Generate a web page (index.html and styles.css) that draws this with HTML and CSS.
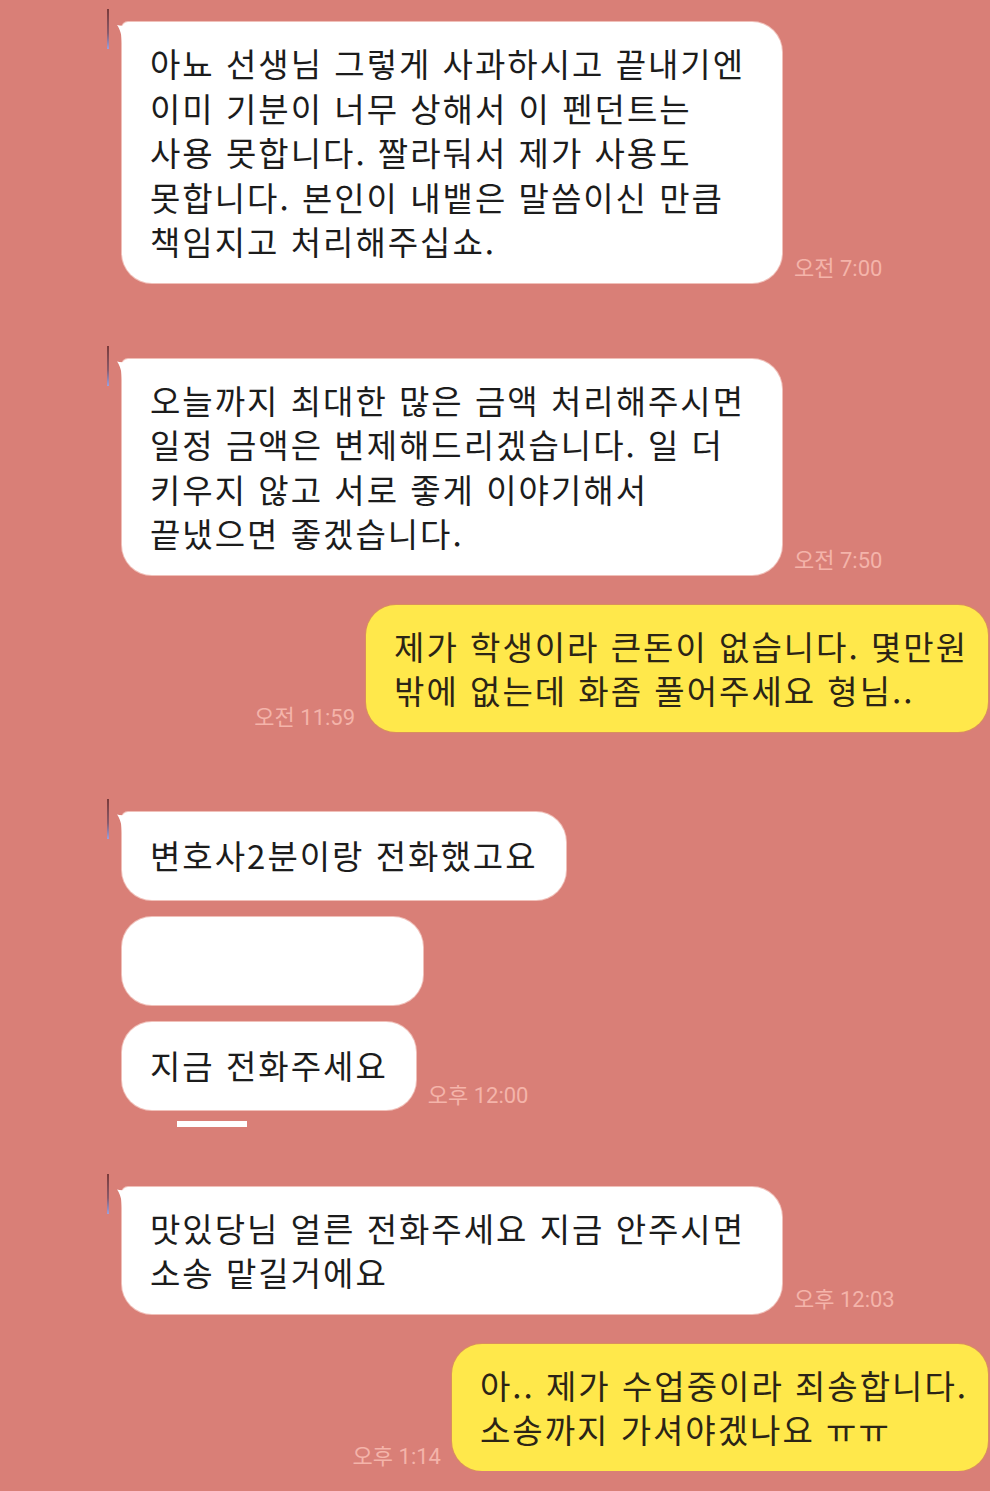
FILE: index.html
```html
<!DOCTYPE html>
<html lang="ko">

<head>
	<meta charset="UTF-8">
	<meta name="viewport" content="width=device-width, initial-scale=1.0">
	<title>채팅</title>
	<link rel="stylesheet" href="styles.css">
</head>

<body>
	<div class="chat">
		<div class="group in">
			<div class="row">
				<div class="bubble tail wide">아뇨 선생님 그렇게 사과하시고 끝내기엔<br>이미 기분이 너무 상해서 이 펜던트는<br>사용 못합니다. 짤라둬서 제가 사용도<br>못합니다. 본인이 내뱉은 말씀이신 만큼<br>책임지고 처리해주십쇼.</div>
				<span class="time">오전 7:00</span>
			</div>
		</div>

		<div class="group in gap-lg">
			<div class="row">
				<div class="bubble tail wide">오늘까지 최대한 많은 금액 처리해주시면<br>일정 금액은 변제해드리겠습니다. 일 더<br>키우지 않고 서로 좋게 이야기해서<br>끝냈으면 좋겠습니다.</div>
				<span class="time">오전 7:50</span>
			</div>
		</div>

		<div class="group out gap-sm">
			<div class="row">
				<span class="time">오전 11:59</span>
				<div class="bubble">제가 학생이라 큰돈이 없습니다. 몇만원<br>밖에 없는데 화좀 풀어주세요 형님..</div>
			</div>
		</div>

		<div class="group in gap-xl">
			<div class="row">
				<div class="bubble tail single">변호사2분이랑 전화했고요</div>
			</div>
			<div class="row">
				<div class="bubble single blank"></div>
			</div>
			<div class="row">
				<div class="bubble single">지금 전화주세요</div>
				<span class="time">오후 12:00</span>
			</div>
			<div class="bar"></div>
		</div>

		<div class="group in gap-md">
			<div class="row">
				<div class="bubble tail wide">맛있당님 얼른 전화주세요 지금 안주시면<br>소송 맡길거에요</div>
				<span class="time">오후 12:03</span>
			</div>
		</div>

		<div class="group out gap-sm">
			<div class="row">
				<span class="time">오후 1:14</span>
				<div class="bubble">아.. 제가 수업중이라 죄송합니다.<br>소송까지 가셔야겠나요 ㅠㅠ</div>
			</div>
		</div>
	</div>
</body>

</html>
```

FILE: styles.css
```css
*,
*:before,
*:after {
	box-sizing: border-box;
}

html {
	font-family: "Noto Sans CJK KR", "Noto Sans", sans-serif;
}

body {
	margin: 0;
	padding: 0;
	background-color: #d97f77;
	color: #1c1c1c;
	overflow: hidden;
}

.chat {
	padding: 22px 2px 0 122px;
}

.group {
	position: relative;
	display: flex;
	flex-direction: column;
	gap: 17px;
}

.group.gap-sm {
	margin-top: 30px;
}

.group.gap-md {
	margin-top: 60px;
}

.group.gap-lg {
	margin-top: 76px;
}

.group.gap-xl {
	margin-top: 80px;
}

/* little mark left of the first bubble */
.group.in:before {
	content: "";
	position: absolute;
	left: -15px;
	top: -13px;
	width: 2px;
	height: 40px;
	background: linear-gradient(#7a3a3a, #8a5a6a 60%, #9aa0e0);
}

.row {
	display: flex;
	align-items: flex-end;
	gap: 12px;
}

.group.out .row {
	justify-content: flex-end;
	gap: 11px;
}

.bubble {
	position: relative;
	font-size: 33px;
	line-height: 44.5px;
	letter-spacing: 2px;
	padding: 19px 28px;
	border-radius: 30px;
	background-color: #fff;
	box-shadow: 0 0 0 1px rgba(255, 235, 230, .6);
	word-break: keep-all;
}

.bubble.wide {
	width: 660px;
}

.bubble.single {
	padding: 21.75px 28px;
}

.bubble.blank {
	width: 301px;
	height: 88px;
}

.bubble.tail {
	border-top-left-radius: 6px;
}

.bubble.tail:before {
	content: "";
	position: absolute;
	left: -5px;
	top: 0;
	width: 22px;
	height: 22px;
	background: #fff;
	clip-path: path("M5 22 C5 13 3 7 0 3 C6 5 12 3 17 0 L22 0 L22 22 Z");
}

.group.out .bubble {
	padding-right: 20px;
	background-color: #ffe84b;
	color: #2b2416;
	box-shadow: 0 0 0 1px rgba(220, 160, 70, .5);
}

.time {
	font-family: Roboto, "Noto Sans CJK KR", sans-serif;
	font-size: 22px;
	line-height: 25px;
	color: #f4b4aa;
	margin-bottom: 2px;
	white-space: nowrap;
}

.bar {
	width: 70px;
	height: 6px;
	margin: -6px 0 0 55px;
	background-color: #fff;
}
```
